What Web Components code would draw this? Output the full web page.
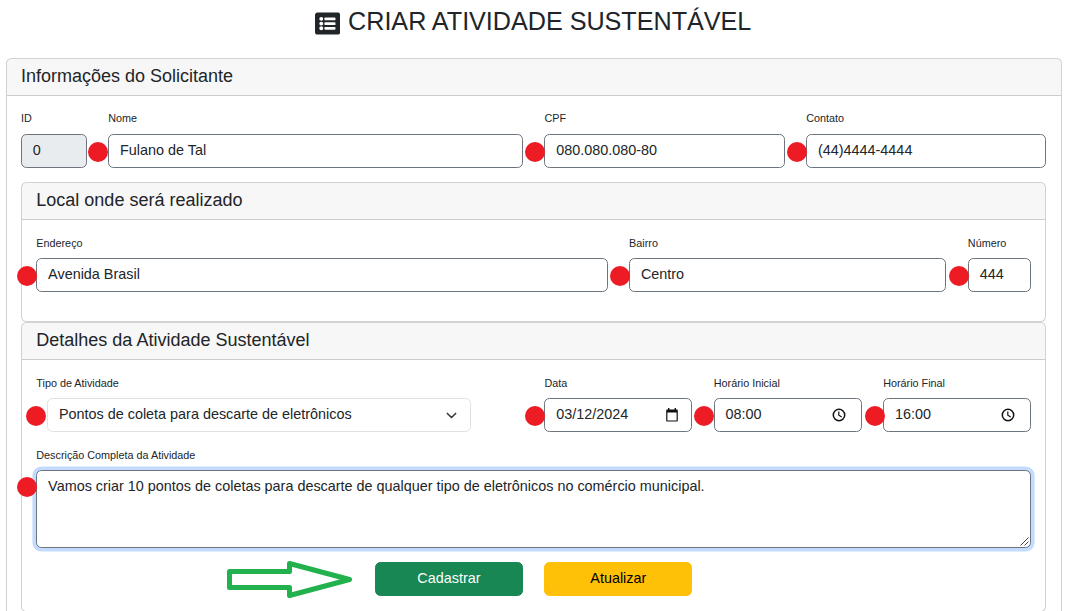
<!DOCTYPE html>
<html lang="pt-BR">
<head>
<meta charset="utf-8">
<title>Criar Atividade Sustentável</title>
<style>
html{font-size:14.4px}
body{margin:0;height:611px;overflow:hidden;background:#fff;color:#212529;font-family:"Liberation Sans",Arial,sans-serif;font-size:14.4px;line-height:1.5}
</style>
</head>
<body>
<activity-page></activity-page>
<script>
const define = (name, html) => customElements.define(name, class extends HTMLElement {
  constructor() {
    super();
    const t = document.createElement('template');
    t.innerHTML = html;
    this.attachShadow({ mode: 'open' }).appendChild(t.content.cloneNode(true));
  }
});

define('page-title', `
<style>
:host{display:flex;justify-content:center;align-items:flex-start;height:57.8px;box-sizing:border-box;padding-top:6px}
h1{margin:0;font-size:25.2px;font-weight:400;line-height:30px;letter-spacing:-.03px;white-space:nowrap}
svg{width:25.2px;height:25.2px;margin:4.9px 7.8px 0 -.6px;fill:#212529}
</style>
<svg viewBox="0 0 512 512"><path d="M464 480H48c-26.51 0-48-21.49-48-48V80c0-26.51 21.49-48 48-48h416c26.51 0 48 21.49 48 48v352c0 26.51-21.49 48-48 48zM128 120c-22.091 0-40 17.909-40 40s17.909 40 40 40 40-17.909 40-40-17.909-40-40-40zm0 96c-22.091 0-40 17.909-40 40s17.909 40 40 40 40-17.909 40-40-17.909-40-40-40zm0 96c-22.091 0-40 17.909-40 40s17.909 40 40 40 40-17.909 40-40-17.909-40-40-40zm288-136v-32c0-6.627-5.373-12-12-12H204c-6.627 0-12 5.373-12 12v32c0 6.627 5.373 12 12 12h200c6.627 0 12-5.373 12-12zm0 96v-32c0-6.627-5.373-12-12-12H204c-6.627 0-12 5.373-12 12v32c0 6.627 5.373 12 12 12h200c6.627 0 12-5.373 12-12zm0 96v-32c0-6.627-5.373-12-12-12H204c-6.627 0-12 5.373-12 12v32c0 6.627 5.373 12 12 12h200c6.627 0 12-5.373 12-12z"/></svg>
<h1><slot></slot></h1>`);

define('form-card', `
<style>
:host{display:block;box-sizing:border-box;border:1px solid rgba(0,0,0,.175);border-radius:5.4px;background:#fff}
header{box-sizing:border-box;padding:7.2px 14.4px;border-bottom:1px solid rgba(0,0,0,.175);background:rgba(0,0,0,.03);border-radius:4.4px 4.4px 0 0}
h5{margin:-.3px 0 .3px;font-size:18px;font-weight:400;line-height:21.6px}
.body{padding:14.4px}
</style>
<header><h5><slot name="title"></slot></h5></header>
<div class="body"><slot></slot></div>`);

define('form-row', `
<style>
:host{display:grid;grid-template-columns:repeat(12,minmax(0,1fr));column-gap:21.6px;margin-bottom:14.4px}
</style>
<slot></slot>`);

define('field-label', `
<style>
:host{display:block;font-size:10.8px;line-height:16.2px;margin-bottom:7.2px;white-space:nowrap}
</style>
<slot></slot>`);

define('form-field', `
<style>
:host{display:block;grid-column:span var(--cols,1);min-width:0}
.box{position:relative;display:flex;justify-content:space-between;box-sizing:border-box;min-height:34.4px;padding:5.4px 10.8px;border:1px solid #6c757d;border-radius:5.4px;background:#fff;white-space:nowrap}
:host([disabled]) .box{background:#e9ecef}
:host([select]) .box{margin-left:10.8px;width:423.8px;border-color:#dee2e6}
:host([multiline]) .box{min-height:77.6px;box-shadow:0 0 0 3.6px rgba(13,110,253,.25)}
.value{margin-top:-.2px}
</style>
<field-label><slot name="label"></slot></field-label>
<div class="box"><span class="value"><slot></slot></span><slot name="icon"></slot><slot name="mark"></slot></div>`);

define('required-dot', `
<style>
:host{position:absolute;left:var(--x,-20px);top:var(--y,7px);width:20px;height:20px;border-radius:50%;background:#ed1c24}
</style>`);

define('calendar-icon', `
<style>:host{display:block;width:12px;height:14px;margin:4px 2.5px 0 0}svg{display:block}</style>
<svg width="12" height="14" viewBox="0 0 12 14"><path fill="#111" fill-rule="evenodd" d="M2 0h1.400v1.400h5.200V0H10v1.400h.8c.6 0 1 .4 1 1v10.200c0 .6-.4 1-1 1H1.200c-.6 0-1-.4-1-1V2.400c0-.6.4-1 1-1H2zM1.400 4.600v7.800h9.200V4.600z"/></svg>`);

define('clock-icon', `
<style>:host{display:block;width:14px;height:14px;margin:4px 3.3px 0 0}svg{display:block}</style>
<svg width="14" height="14" viewBox="0 0 14 14" fill="none" stroke="#111"><circle cx="7" cy="7" r="5.700" stroke-width="1.500"/><path d="M6.800 3.500v3.700l2.900 1.800" stroke-width="1.200"/></svg>`);

define('chevron-icon', `
<style>:host{display:block;width:11px;height:11px;margin:5.500px 2px 0 0}svg{display:block}</style>
<svg width="11" height="11" viewBox="0 0 16 16" fill="none" stroke="#343a40" stroke-width="2.300" stroke-linecap="round" stroke-linejoin="round"><path d="m2 5 6 6 6-6"/></svg>`);

define('resize-grip', `
<style>:host{position:absolute;right:1px;bottom:1px;width:9px;height:9px}svg{display:block}</style>
<svg width="9" height="9" viewBox="0 0 9 9" stroke="#444" stroke-width="1"><path d="M.5 8.500 8.500.5M4.500 8.500l4-4"/></svg>`);

define('form-button', `
<style>
:host{display:block;grid-column:span 2}
:host([start]){grid-column:5/span 2}
button{display:block;width:100%;height:34px;box-sizing:border-box;padding:5.2px 10.8px;border:1px solid var(--bg);border-radius:5.4px;background:var(--bg);color:var(--fg);font:inherit;text-align:center}
</style>
<button><slot></slot></button>`);

define('button-row', `
<style>
:host{display:grid;position:relative;grid-template-columns:repeat(12,minmax(0,1fr));column-gap:21.6px;height:34.4px;margin-top:-.1px}
</style>
<slot></slot>`);

define('pointer-arrow', `
<style>:host{position:absolute;left:190.600px;top:-2.300px;width:126px;height:38px}svg{display:block}</style>
<svg width="126" height="38" viewBox="0 0 126 38"><path d="M2.500 11.500h60v-8l60 16-60 16v-8h-60z" fill="none" stroke="#22b14c" stroke-width="5" stroke-linejoin="round"/></svg>`);

define('activity-page', `
<style>
:host{display:block;height:611px;overflow:hidden}
.outer{margin:0 5.270px 0 5.540px}
</style>
<page-title>CRIAR ATIVIDADE SUSTENTÁVEL</page-title>
<form-card class="outer"><span slot="title">Informações do Solicitante</span>
  <form-row>
    <form-field disabled><span slot="label">ID</span>0</form-field>
    <form-field style="--cols:5"><span slot="label">Nome</span>Fulano de Tal<required-dot slot="mark" style="--x:-21px"></required-dot></form-field>
    <form-field style="--cols:3"><span slot="label">CPF</span>080.080.080-80<required-dot slot="mark"></required-dot></form-field>
    <form-field style="--cols:3"><span slot="label">Contato</span>(44)4444-4444<required-dot slot="mark"></required-dot></form-field>
  </form-row>
  <form-card><span slot="title">Local onde será realizado</span>
    <form-row>
      <form-field style="--cols:7"><span slot="label">Endereço</span>Avenida Brasil<required-dot slot="mark"></required-dot></form-field>
      <form-field style="--cols:4"><span slot="label">Bairro</span>Centro<required-dot slot="mark"></required-dot></form-field>
      <form-field><span slot="label">Número</span>444<required-dot slot="mark"></required-dot></form-field>
    </form-row>
  </form-card>
  <form-card><span slot="title">Detalhes da Atividade Sustentável</span>
    <form-row>
      <form-field select style="--cols:6"><span slot="label">Tipo de Atividade</span>Pontos de coleta para descarte de eletrônicos<chevron-icon slot="icon"></chevron-icon><required-dot slot="mark" style="--x:-22px"></required-dot></form-field>
      <form-field style="--cols:2"><span slot="label">Data</span>03/12/2024<calendar-icon slot="icon"></calendar-icon><required-dot slot="mark"></required-dot></form-field>
      <form-field style="--cols:2"><span slot="label">Horário Inicial</span>08:00<clock-icon slot="icon"></clock-icon><required-dot slot="mark" style="--x:-20.600px"></required-dot></form-field>
      <form-field style="--cols:2"><span slot="label">Horário Final</span>16:00<clock-icon slot="icon" style="margin-right:3.800px"></clock-icon><required-dot slot="mark" style="--x:-19px"></required-dot></form-field>
    </form-row>
    <form-row>
      <form-field multiline style="--cols:12"><span slot="label">Descrição Completa da Atividade</span>Vamos criar 10 pontos de coletas para descarte de qualquer tipo de eletrônicos no comércio municipal.<resize-grip slot="icon"></resize-grip><required-dot slot="mark" style="--y:6px"></required-dot></form-field>
    </form-row>
    <button-row>
      <form-button start style="--bg:#198754;--fg:#fff">Cadastrar</form-button>
      <form-button style="--bg:#ffc107;--fg:#000">Atualizar</form-button>
      <pointer-arrow></pointer-arrow>
    </button-row>
  </form-card>
</form-card>`);
</script>
</body>
</html>
